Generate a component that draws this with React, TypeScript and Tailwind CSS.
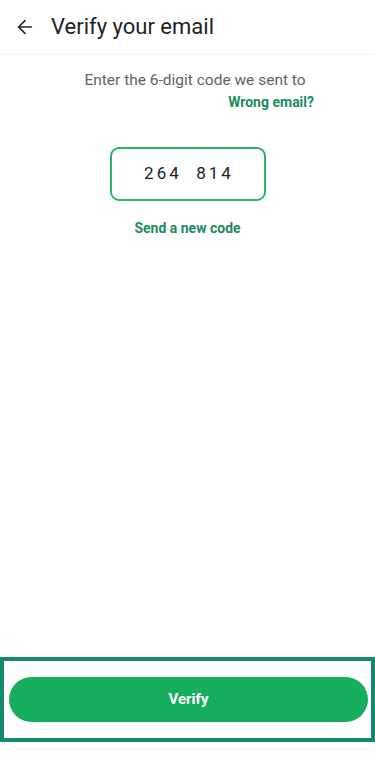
import { ArrowLeft } from 'lucide-react';

export default function App() {
  return (
    <div
      className="flex flex-col h-[761px] w-[375px] bg-white"
      style={{ fontFamily: 'Roboto, "Liberation Sans", sans-serif' }}
    >
      {/* top bar */}
      <div className="flex items-center h-[55px] border-b border-[#f1f1f1]">
        <ArrowLeft className="ml-[14px] w-[22px] h-[22px] text-[#222]" strokeWidth={1.7} />
        <h1 className="ml-[15px] text-[22px] text-[#1f1f1f] leading-none">Verify your email</h1>
      </div>

      <div className="flex flex-col items-center">
        <p className="mt-[15px] pl-[15px] text-[15.5px] leading-[20px] text-[#5f6368]">
          Enter the 6-digit code we sent to
        </p>
        <div className="w-full pr-[61px] text-right">
          <button className="text-[14px] leading-[20px] font-bold text-[#1d8a5c]">Wrong email?</button>
        </div>

        <div className="mt-[33px] flex items-center justify-center w-[156px] h-[54px] rounded-[9px] border-2 border-[#2cb36a]">
          <span className="text-[17px] text-[#222] tracking-[3px] pl-[3px]">264&nbsp;&nbsp;814</span>
        </div>

        <button className="mt-[17px] text-[14px] leading-[20px] font-bold text-[#1d8a5c]">
          Send a new code
        </button>
      </div>

      <div className="flex-1" />

      <div className="mb-[19px] border-4 border-[#128a6b] pt-[16px] pb-[16px] pl-[5px] pr-[3px]">
        <button className="w-full h-[45px] rounded-full bg-[#16ad5c] text-white text-[15px] font-bold">
          Verify
        </button>
      </div>
    </div>
  );
}
